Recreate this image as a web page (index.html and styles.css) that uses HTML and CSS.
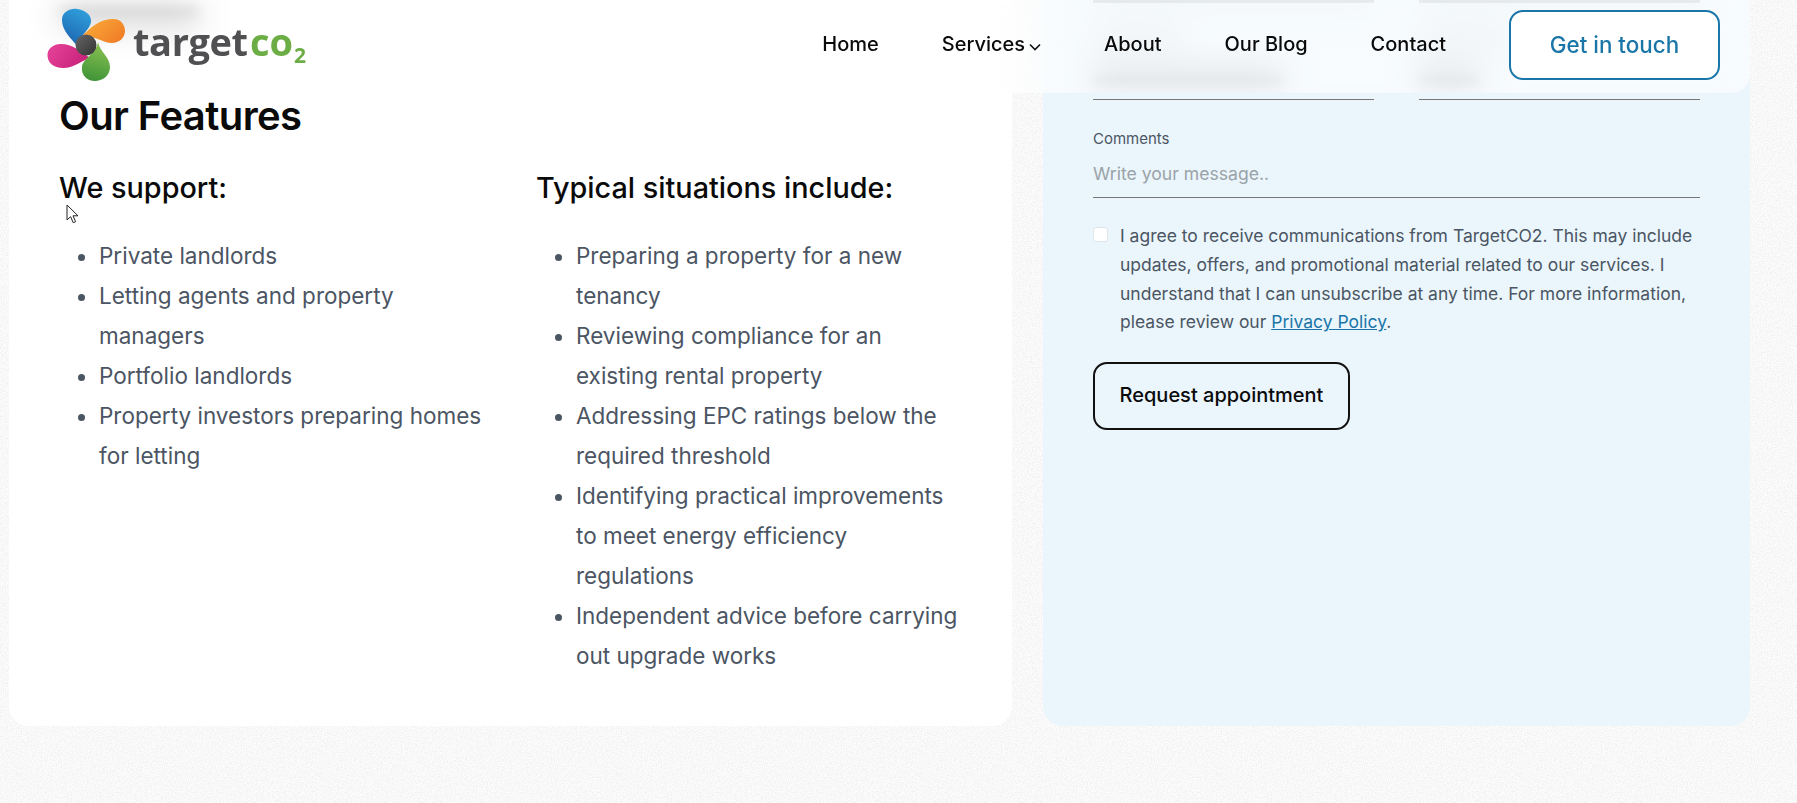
FILE: index.html
```html
<!DOCTYPE html>
<html>
<head>
	<meta charset="UTF-8">
	<title>TargetCO2</title>
	<link rel="stylesheet" href="styles.css">
</head>
<body>
	<header class="site-header">
		<a class="logo" href="#">
			<svg width="280" height="90" viewBox="0 0 280 90">
				<defs>
					<linearGradient id="blue" x1="0.7" y1="0" x2="0.3" y2="1">
						<stop offset="0" stop-color="#2f9fdc"/>
						<stop offset="1" stop-color="#1c62ad"/>
					</linearGradient>
					<linearGradient id="orange" x1="0" y1="0" x2="1" y2="0.6">
						<stop offset="0" stop-color="#fbb03b"/>
						<stop offset="1" stop-color="#f18028"/>
					</linearGradient>
					<linearGradient id="pink" x1="0" y1="0" x2="1" y2="0.4">
						<stop offset="0" stop-color="#e8449a"/>
						<stop offset="1" stop-color="#c9237b"/>
					</linearGradient>
					<linearGradient id="green" x1="0.6" y1="0" x2="0.4" y2="1">
						<stop offset="0" stop-color="#8cc152"/>
						<stop offset="1" stop-color="#3f9437"/>
					</linearGradient>
					<linearGradient id="hub" x1="0" y1="0" x2="1" y2="1">
						<stop offset="0" stop-color="#666"/>
						<stop offset="1" stop-color="#333"/>
					</linearGradient>
				</defs>
				<path fill="url(#blue)" d="M48 47C41 38 32 31 32 20C32 12 40 8 47 9C55 10 62 15 61 22C60 30 50 34 48 47Z"/>
				<path fill="url(#orange)" d="M52 36C60 28 70 19 82 19C90 18 95 24 95 31C95 38 89 43 82 43C73 43 64 35 52 36Z"/>
				<path fill="url(#pink)" d="M60 58C52 52 42 44 31 44C22 44 17 50 17.5 56C18 64 25 68 33 68C45 68 52 60 60 58Z"/>
				<path fill="url(#green)" d="M68 42C70 52 80 57 80 67C80 76 72 81 65 81C57 81 51 75 52 67C53 58 66 54 68 42Z"/>
				<circle cx="56" cy="45" r="10.5" fill="url(#hub)"/>
				<text class="logo-target" x="103" y="56">target</text>
				<text class="logo-co" x="220" y="56">co</text>
				<text class="logo-two" x="276" y="63" text-anchor="end">2</text>
			</svg>
		</a>
		<nav class="nav">
			<a href="#">Home</a>
			<a href="#" class="has-menu">Services<svg width="12" height="8" viewBox="0 0 12 8"><path d="M1 1.5 6 6.5l5-5" fill="none" stroke="#111" stroke-width="1.6"/></svg></a>
			<a href="#">About</a>
			<a href="#">Our Blog</a>
			<a href="#">Contact</a>
			<a href="#" class="btn-touch">Get in touch</a>
		</nav>
	</header>

	<main class="columns">
		<section class="card features">
			<div class="scrolled-top"><span class="ghost ghost-title"></span></div>
			<h2>Our Features</h2>
			<div class="feature-cols">
				<div>
					<h3>We support:</h3>
					<ul>
						<li>Private landlords</li>
						<li>Letting agents and property managers</li>
						<li>Portfolio landlords</li>
						<li>Property investors preparing homes for letting</li>
					</ul>
				</div>
				<div>
					<h3>Typical situations include:</h3>
					<ul>
						<li>Preparing a property for a new tenancy</li>
						<li>Reviewing compliance for an existing rental property</li>
						<li>Addressing EPC ratings below the required threshold</li>
						<li>Identifying practical improvements to meet energy efficiency regulations</li>
						<li>Independent advice before carrying out upgrade works</li>
					</ul>
				</div>
			</div>
			<svg class="cursor" width="14" height="20" viewBox="0 0 14 20"><path d="M1 1v15l3.6-3.3 2.6 6 2.4-1-2.6-5.9H12Z" fill="#fff" stroke="#222" stroke-width="1"/></svg>
		</section>

		<form class="card enquiry">
			<!-- the upper fields have scrolled under the header, only their blur shows -->
			<div class="field-row">
				<div class="hidden-field">
					<span class="ghost ghost-label"></span>
					<span class="ghost ghost-value"></span>
				</div>
				<div class="hidden-field">
					<span class="ghost ghost-label"></span>
					<span class="ghost ghost-short"></span>
				</div>
			</div>
			<div class="field">
				<label>Comments</label>
				<div class="input">Write your message..</div>
			</div>
			<div class="consent">
				<span class="box"></span>
				<p>I agree to receive communications from TargetCO2. This may include updates, offers, and promotional material related to our services. I understand that I can unsubscribe at any time. For more information, please review our <a href="#">Privacy Policy</a>.</p>
			</div>
			<button class="btn-submit" type="button">Request appointment</button>
		</form>
	</main>
</body>
</html>
```

FILE: styles.css
```css
* {
	box-sizing: border-box;
}

body {
	margin: 0;
	height: 803px;
	overflow: hidden;
	background-color: #fcfcfc;
	background-image: url("data:image/svg+xml,%3Csvg xmlns='http://www.w3.org/2000/svg' width='300' height='300'%3E%3Cfilter id='n'%3E%3CfeTurbulence type='fractalNoise' baseFrequency='0.8' numOctaves='2'/%3E%3CfeColorMatrix values='0 0 0 0 0.5 0 0 0 0 0.5 0 0 0 0 0.5 0 0 0 0.5 -0.2'/%3E%3C/filter%3E%3Crect width='300' height='300' filter='url(%23n)'/%3E%3C/svg%3E");
	font-family: Inter, "Liberation Sans", sans-serif;
	color: #0a0a0a;
}

a {
	color: inherit;
	text-decoration: none;
}

/* header sits over the scrolled page */
.site-header {
	position: fixed;
	top: 0;
	left: 9px;
	width: 1741px;
	height: 93px;
	display: flex;
	align-items: center;
	justify-content: space-between;
	padding: 0 30px 3px 21px;
	background: rgba(255, 255, 255, 0.62);
	backdrop-filter: blur(16px);
	border-radius: 0 0 18px 18px;
	z-index: 5;
}

.logo svg {
	display: block;
	filter: blur(0.4px);
}

.logo-target {
	font-family: "Open Sans", sans-serif;
	font-weight: 700;
	font-size: 38px;
	letter-spacing: -0.4px;
	fill: #505052;
}

.logo-co {
	font-family: "Open Sans", sans-serif;
	font-weight: 700;
	font-size: 38px;
	fill: #6cae45;
}

.logo-two {
	font-family: "Open Sans", sans-serif;
	font-weight: 700;
	font-size: 21px;
	fill: #6cae45;
}

.nav {
	display: flex;
	align-items: center;
	gap: 63px;
	font-size: 20px;
	font-weight: 500;
	color: #0a0a0a;
}

.nav a:not(.btn-touch) {
	margin-top: -2px;
}

.has-menu svg {
	margin-left: 4px;
}

.btn-touch {
	display: flex;
	align-items: center;
	justify-content: center;
	width: 211px;
	height: 70px;
	padding-bottom: 2px;
	border: 2px solid #1a76a8;
	border-radius: 14px;
	background: #fff;
	color: #1a76a8;
	font-size: 22.4px;
}

.columns {
	display: grid;
	grid-template-columns: 1003px 707px;
	column-gap: 31px;
	height: 726px;
	margin-left: 9px;
}

.card {
	position: relative;
	border-radius: 0 0 20px 20px;
	overflow: hidden;
}

.features {
	background: #fff;
	padding: 0 50px;
}

.scrolled-top {
	height: 92px;
	padding-top: 8px;
}

/* soft shapes for the header's blur to smear */
.ghost {
	display: block;
	background: #8a8f94;
	filter: blur(5px);
}

.ghost-title {
	width: 140px;
	height: 16px;
	background: #666;
}

.ghost-label {
	width: 90px;
	height: 8px;
	margin-bottom: 28px;
	background: #bbb;
}

.ghost-value {
	width: 190px;
	height: 12px;
}

.ghost-short {
	width: 60px;
	height: 12px;
}

h2 {
	margin: 0 0 30px;
	font-size: 40px;
	line-height: 48px;
	font-weight: 600;
	letter-spacing: -0.6px;
}

h3 {
	margin: 0 0 30px;
	font-size: 28.8px;
	line-height: 36px;
	font-weight: 500;
}

.feature-cols {
	display: grid;
	grid-template-columns: 1fr 1fr;
	column-gap: 51px;
}

ul {
	margin: 0;
	padding-left: 40px;
	font-size: 22.5px;
	line-height: 40px;
	color: #4b5563;
}

.cursor {
	position: absolute;
	left: 57px;
	top: 204px;
}

.enquiry {
	background: #eaf5fc;
	padding: 0 50px;
	font-size: 17.5px;
	color: #4b5563;
}

.field-row {
	display: grid;
	grid-template-columns: 281px 281px;
	column-gap: 45px;
	margin-bottom: 29px;
}

/* field above the comments, its top line just under the page edge */
.hidden-field {
	height: 100px;
	padding-top: 32px;
	border-top: 3px solid #9aa0a5;
	border-bottom: 1px solid #777;
}

.field label {
	display: block;
	font-size: 15px;
	line-height: 20px;
	margin-bottom: 7px;
}

.input {
	height: 42px;
	padding-top: 5px;
	border-bottom: 1px solid #777;
	font-size: 17.6px;
	line-height: 26px;
	color: #9aa3a8;
}

.consent {
	display: flex;
	gap: 12px;
	margin-top: 24px;
	line-height: 28.8px;
}

.consent p {
	margin: 0;
}

.box {
	flex: none;
	width: 15px;
	height: 15px;
	margin-top: 5px;
	background: #fff;
	border: 1px solid #dfe5e9;
	border-radius: 3px;
}

.consent a {
	color: #1a76a8;
	text-decoration: underline;
}

.btn-submit {
	display: block;
	width: 257px;
	height: 68px;
	margin-top: 25px;
	padding-bottom: 3px;
	border: 2px solid #111;
	border-radius: 14px;
	background: transparent;
	color: #0a0a0a;
	font-family: inherit;
	font-size: 20px;
	font-weight: 500;
}
```
